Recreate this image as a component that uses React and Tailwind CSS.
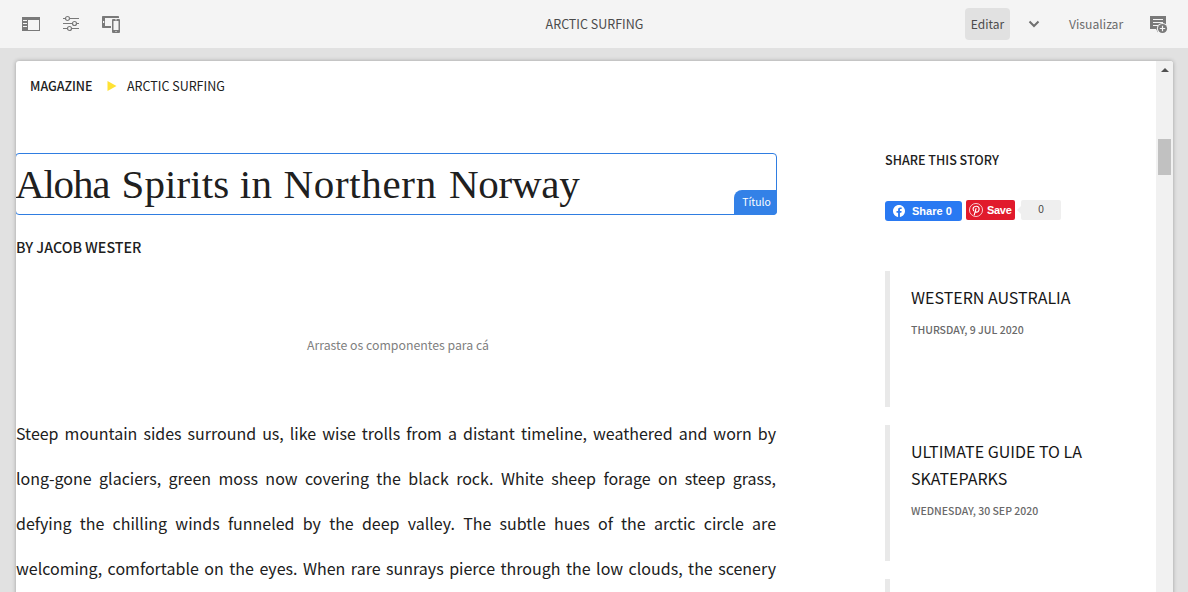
const RailIcon = () => (
  <svg width="18" height="14" viewBox="0 0 18 14" shapeRendering="crispEdges" className="shrink-0">
    <path fill="#797979" fillRule="evenodd" d="M0 0h18v14H0zM6 3v10h11V3z" />
    <path fill="#f4f4f4" d="M1 3h4v1H1zM1 6h4v1H1zM1 9h4v1H1z" />
  </svg>
);

const SlidersIcon = () => (
  <svg width="18" height="18" viewBox="0 0 18 18" className="shrink-0" fill="none" stroke="#797979">
    <path d="M1 3.500h2.500M7.500 3.500H17M1 8.500h9.500M14.500 8.500H17M1 13.500h4M9.500 13.500H17" strokeWidth="1.100" />
    <circle cx="5.500" cy="3.500" r="2" strokeWidth="1.200" />
    <circle cx="12.500" cy="8.500" r="2" strokeWidth="1.200" />
    <circle cx="7.500" cy="13.500" r="2" strokeWidth="1.200" />
  </svg>
);

const DevicesIcon = () => (
  <svg width="18" height="18" viewBox="0 0 18 18" className="mt-0.5 shrink-0">
    <path fill="#797979" d="M0.800 0H16.200a.8.8 0 0 1 .8.8V2H3v8h6v2H.8a.8.8 0 0 1-.8-.8V.8A.8.8 0 0 1 .8 0z" />
    <rect x="1" y="5" width="1.200" height="2" fill="#f4f4f4" />
    <rect x="10" y="3" width="8" height="14" rx="1" fill="#797979" />
    <path fill="#f4f4f4" d="M11.500 5h5v9h-5zM13 3.600h2v.6h-2zM13.500 15h1v1h-1z" />
  </svg>
);

const AnnotateIcon = () => (
  <svg width="18" height="18" viewBox="0 0 18 18" className="mt-0.5 shrink-0">
    <path fill="#797979" d="M0 0h16v13h-8l0 3.500-2-3.500H0z" />
    <path stroke="#f4f4f4" d="M3 3.500h10M3 6.500h10M3 9.500h5" />
    <circle cx="12.500" cy="12.500" r="5.600" fill="#f4f4f4" />
    <circle cx="12.500" cy="12.500" r="4.600" fill="#797979" />
    <path stroke="#f4f4f4" strokeWidth="1.200" d="M12.500 9.800v5.400M9.800 12.500h5.400" />
  </svg>
);

const FacebookIcon = () => (
  <svg width="12" height="12" viewBox="0 0 24 24" className="shrink-0">
    <path
      fill="#fff"
      d="M24 12.073c0-6.627-5.373-12-12-12s-12 5.373-12 12c0 5.990 4.388 10.954 10.125 11.854v-8.385H7.078v-3.470h3.047V9.430c0-3.007 1.792-4.669 4.533-4.669 1.312 0 2.686.235 2.686.235v2.953H15.830c-1.491 0-1.956.925-1.956 1.874v2.250h3.328l-.532 3.470h-2.796v8.385C19.612 23.027 24 18.062 24 12.073z"
    />
  </svg>
);

const PinterestIcon = () => (
  <svg width="14" height="14" viewBox="0 0 24 24" className="shrink-0">
    <circle cx="12" cy="12" r="11.200" fill="none" stroke="#fff" strokeWidth="1.300" />
    <path
      fill="none"
      stroke="#fff"
      strokeWidth="2"
      strokeLinecap="round"
      d="M9 20.500L12 9.500M7.900 13.300C5.500 9.500 8 5.500 12.300 5.500c4 0 5.700 2.900 4.900 6.200-.7 3-2.800 4.300-4.500 4-1-.2-1.600-.8-1.800-1.700"
    />
  </svg>
);

const stories = [
  { title: "WESTERN AUSTRALIA", date: "THURSDAY, 9 JUL 2020" },
  { title: "ULTIMATE GUIDE TO LA SKATEPARKS", date: "WEDNESDAY, 30 SEP 2020" },
  { title: "", date: "" },
];

function Toolbar() {
  return (
    <header className="grid h-12 shrink-0 grid-cols-[1fr_auto_1fr] items-center bg-[#f4f4f4] text-[12.200px] text-[#6b6b6b]">
      <div className="flex items-center gap-[22px] pl-[22px]">
        <RailIcon />
        <SlidersIcon />
        <DevicesIcon />
      </div>
      <div className="pl-px text-[12.500px] leading-6 text-[#4b4b4b]">ARCTIC SURFING</div>
      <div className="flex items-center justify-end pr-5">
        <button className="h-8 w-[45px] rounded bg-[#e1e1e1] text-center text-[12px] leading-8 text-[#4b4b4b]">Editar</button>
        <svg width="12" height="8" viewBox="0 0 12 8" className="ml-[18px] shrink-0">
          <path d="M1.500 1.500L6 6l4.500-4.500" fill="none" stroke="#707070" strokeWidth="2" />
        </svg>
        <span className="ml-7 w-[56px] pl-px">Visualizar</span>
        <span className="ml-[26px]">
          <AnnotateIcon />
        </span>
      </div>
    </header>
  );
}

function Article() {
  return (
    <main className="w-[761px] shrink-0">
      <nav className="flex h-[25px] items-center pl-[14px] text-[12.500px]">
        <span className="w-[77px] pt-0.5 font-medium">MAGAZINE</span>
        <svg width="10" height="10" viewBox="0 0 10 10" className="mr-[10px] shrink-0">
          <path d="M.5 0L9.500 5 .5 10z" fill="#ffe234" />
        </svg>
        <span className="pt-0.5">ARCTIC SURFING</span>
      </nav>
      <div className="relative -ml-px mt-[55px] h-[62px] w-[762px] rounded border border-[#2f7de1]">
        <h1 className="whitespace-nowrap font-['Liberation_Serif',serif] text-[41px] leading-[60px]">
          <span className="-ml-px tracking-[-1.200px]">Aloha</span> <span className="ml-[2px] tracking-[0.120px]">Spirits</span>{" "}
          <span className="tracking-[0.400px]">in</span> <span className="ml-px tracking-[0.650px]">Northern</span>{" "}
          <span className="ml-[2px] tracking-[-0.300px]">Norway</span>
        </h1>
        <span className="absolute -bottom-px -right-px h-[25px] w-[43px] rounded-br rounded-tl-lg bg-[#3381e7] pl-[2px] text-center text-[10.400px] leading-[23px] text-white">
          Título
        </span>
      </div>
      <p className="mt-5 text-[14.270px] font-medium leading-6">BY JACOB WESTER</p>
      <div className="mt-[74px] pl-[3px] text-center text-[12.300px] leading-6 text-[#808080]">Arraste os componentes para cá</div>
      <p className="mt-[54px] w-[760px] text-justify text-[16px] leading-[45px] text-[#202020]">
        Steep mountain sides surround us, like wise trolls from a distant timeline, weathered and worn by long-gone
        glaciers, green moss now covering the black rock. White sheep forage on steep grass, defying the chilling winds
        funneled by the deep valley. The subtle hues of the arctic circle are welcoming, comfortable on the eyes. When
        rare sunrays pierce through the low clouds, the scenery
        <span className="inline-block w-full" />
      </p>
    </main>
  );
}

function Sidebar() {
  return (
    <aside className="ml-[108px] w-[210px] pt-[75px]">
      <h2 className="text-[12.550px] font-medium leading-6">SHARE THIS STORY</h2>
      <div className="mt-7 flex h-[21px] items-start font-['Liberation_Sans',sans-serif] text-[11px] font-bold text-white">
        <button className="mt-px flex h-5 w-[77px] items-center gap-[7px] rounded-[3px] bg-[#2979f2] pl-2">
          <FacebookIcon />
          <span>Share 0</span>
        </button>
        <button className="ml-1 flex h-5 w-[49px] items-center gap-1 rounded-[2px] bg-[#e11a2c] pl-[3px]">
          <PinterestIcon />
          <span className="tracking-[-0.300px]">Save</span>
        </button>
        <svg width="4" height="8" viewBox="0 0 4 8" className="ml-[2px] mt-[6px] shrink-0">
          <path d="M4 0v8L0 4z" fill="#efefef" />
        </svg>
        <span className="h-5 w-10 rounded-[2px] bg-[#efefef] text-center text-[10px] font-normal leading-5 text-[#444]">0</span>
      </div>
      <ul className="mt-[50px] flex flex-col gap-[18px]">
        {stories.map((s, i) => (
          <li key={i} className="h-[136px] border-l-[5px] border-[#e9e9e9] pl-[21px] pt-[13px]">
            <h3 className="text-[16px] leading-[27px] text-[#161616]">{s.title}</h3>
            <p className="mt-[10px] text-[10.500px] font-medium leading-[18px] text-[#696969]">{s.date}</p>
          </li>
        ))}
      </ul>
    </aside>
  );
}

export default function App() {
  return (
    <div className="flex h-[592px] w-[1188px] flex-col overflow-hidden bg-[#e1e1e1] font-['Noto_Sans_CJK_SC',sans-serif] text-[#202020]">
      <Toolbar />
      <div className="ml-4 mt-[13px] flex h-[540px] w-[1157px] shrink-0 overflow-hidden rounded-t-[3px] bg-white shadow-[0_0_4px_rgba(0,0,0,0.3)]">
        <div className="flex w-[1140px] shrink-0 overflow-hidden">
          <div className="pt-3">
            <Article />
          </div>
          <div className="pt-3">
            <Sidebar />
          </div>
        </div>
        <div className="flex w-[17px] flex-col items-center bg-[#f1f1f1] pt-[7px]">
          <svg width="8" height="4" viewBox="0 0 8 4" className="shrink-0">
            <path d="M0 4L4 0l4 4z" fill="#505050" />
          </svg>
          <div className="mt-[67px] h-9 w-[13px] shrink-0 bg-[#c1c1c1]" />
        </div>
      </div>
    </div>
  );
}
